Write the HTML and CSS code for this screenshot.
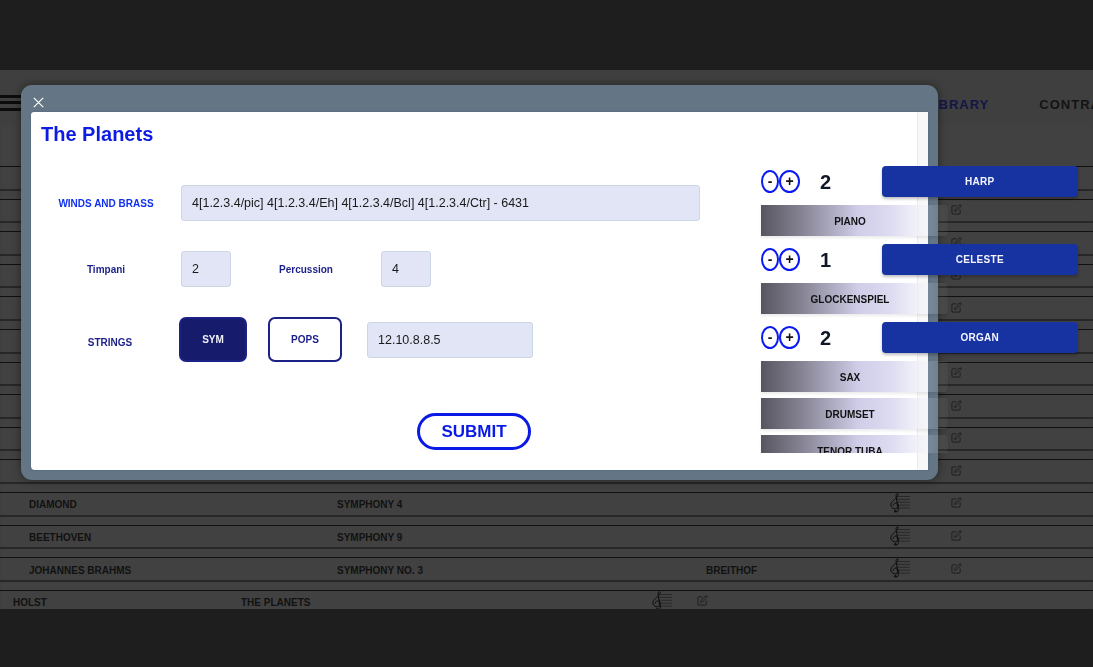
FILE: index.html
```html
<!DOCTYPE html>
<html lang="en">
<head>
  <meta charset="UTF-8" />
  <title>Library</title>
  <link rel="stylesheet" href="styles.css">
</head>
<body>
  <svg class="defs" width="0" height="0">
    <symbol id="clef" viewBox="0 0 20 20">
      <path class="staff" d="M6 3.500h14M6 6.400h14M6 9.300h14M6 12.200h14M6 15.100h14" />
      <path class="clef-stroke" d="M5.500 18.500c1.800.8 3.200-.3 2.900-2.200L6 3.400C5.800 1.400 7.500-.2 8 1.300c.8 2.600-5 5.700-6.600 8.500-1.500 3 .5 6 3.800 6 3 0 4.400-3.400 2-5.200-2-1.300-4.200 0-3.900 2.100" />
      <circle cx="5.400" cy="18.200" r="1.200" />
    </symbol>
    <symbol id="edit" viewBox="0 0 24 24">
      <path d="M11 4H4a2 2 0 0 0-2 2v14a2 2 0 0 0 2 2h14a2 2 0 0 0 2-2v-7" />
      <path d="M18.500 2.500a2.121 2.121 0 0 1 3 3L12 15l-4 1 1-4 9.500-9.500z" />
    </symbol>
  </svg>

  <div class="letterbox"></div>

  <div class="app">
    <header class="topbar">
      <div class="burger"><i></i><i></i><i></i></div>
      <nav class="nav">
        <a class="current">LIBRARY</a>
        <a>CONTRACTS</a>
      </nav>
    </header>

    <section class="rows">
      <div class="row"><span></span><span></span><span></span><svg class="ico-clef"><use href="#clef" /></svg><svg class="ico-edit"><use href="#edit" /></svg></div>
      <div class="row"><span></span><span></span><span></span><svg class="ico-clef"><use href="#clef" /></svg><svg class="ico-edit"><use href="#edit" /></svg></div>
      <div class="row"><span></span><span></span><span></span><svg class="ico-clef"><use href="#clef" /></svg><svg class="ico-edit"><use href="#edit" /></svg></div>
      <div class="row"><span></span><span></span><span></span><svg class="ico-clef"><use href="#clef" /></svg><svg class="ico-edit"><use href="#edit" /></svg></div>
      <div class="row"><span></span><span></span><span></span><svg class="ico-clef"><use href="#clef" /></svg><svg class="ico-edit"><use href="#edit" /></svg></div>
      <div class="row"><span></span><span></span><span></span><svg class="ico-clef"><use href="#clef" /></svg><svg class="ico-edit"><use href="#edit" /></svg></div>
      <div class="row"><span></span><span></span><span></span><svg class="ico-clef"><use href="#clef" /></svg><svg class="ico-edit"><use href="#edit" /></svg></div>
      <div class="row"><span></span><span></span><span></span><svg class="ico-clef"><use href="#clef" /></svg><svg class="ico-edit"><use href="#edit" /></svg></div>
      <div class="row"><span></span><span></span><span></span><svg class="ico-clef"><use href="#clef" /></svg><svg class="ico-edit"><use href="#edit" /></svg></div>
      <div class="row"><span></span><span></span><span></span><svg class="ico-clef"><use href="#clef" /></svg><svg class="ico-edit"><use href="#edit" /></svg></div>
      <div class="row"><span>DIAMOND</span><span>SYMPHONY 4</span><span></span><svg class="ico-clef"><use href="#clef" /></svg><svg class="ico-edit"><use href="#edit" /></svg></div>
      <div class="row"><span>BEETHOVEN</span><span>SYMPHONY 9</span><span></span><svg class="ico-clef"><use href="#clef" /></svg><svg class="ico-edit"><use href="#edit" /></svg></div>
      <div class="row"><span>JOHANNES BRAHMS</span><span>SYMPHONY NO. 3</span><span>BREITHOF</span><svg class="ico-clef"><use href="#clef" /></svg><svg class="ico-edit"><use href="#edit" /></svg></div>
      <div class="row row-new"><span>HOLST</span><span>THE PLANETS</span><svg class="ico-clef"><use href="#clef" /></svg><svg class="ico-edit"><use href="#edit" /></svg></div>
    </section>
  </div>

  <div class="letterbox letterbox-end"></div>

  <div class="modal">
    <button class="modal-close" aria-label="Close">
      <svg width="11" height="11" viewBox="0 0 11 11"><path d="M.8.800l9.400 9.400M10.200.800L.8 10.200" /></svg>
    </button>
    <div class="modal-body">
      <div class="scroll-track"></div>

      <form class="score-form">
        <h2>The Planets</h2>

        <div class="form-row">
          <label class="label label-bright">WINDS AND BRASS</label>
          <input class="field field-winds" value="4[1.2.3.4/pic] 4[1.2.3.4/Eh] 4[1.2.3.4/Bcl] 4[1.2.3.4/Ctr] - 6431" />
        </div>

        <div class="form-row">
          <label class="label">Timpani</label>
          <input class="field field-small" value="2" />
          <label class="label">Percussion</label>
          <input class="field field-small" value="4" />
        </div>

        <div class="form-row">
          <label class="label label-strings">STRINGS</label>
          <button type="button" class="toggle toggle-on">SYM</button>
          <button type="button" class="toggle toggle-pops">POPS</button>
          <input class="field field-strings" value="12.10.8.8.5" />
        </div>

        <button type="button" class="submit">SUBMIT</button>
      </form>

      <div class="instruments">
        <div class="count-row">
          <button class="step step-minus">-</button><button class="step">+</button>
          <span class="count">2</span>
          <button class="inst-on">HARP</button>
        </div>
        <button class="inst">PIANO</button>
        <div class="count-row">
          <button class="step step-minus">-</button><button class="step">+</button>
          <span class="count">1</span>
          <button class="inst-on">CELESTE</button>
        </div>
        <button class="inst">GLOCKENSPIEL</button>
        <div class="count-row">
          <button class="step step-minus">-</button><button class="step">+</button>
          <span class="count">2</span>
          <button class="inst-on">ORGAN</button>
        </div>
        <button class="inst">SAX</button>
        <button class="inst inst-tight">DRUMSET</button>
        <button class="inst inst-tight">TENOR TUBA</button>
      </div>
    </div>
  </div>
</body>
</html>
```

FILE: styles.css
```css
* {
  box-sizing: border-box;
}
html, body {
  height: 100%;
}
body {
  margin: 0;
  overflow: hidden;
  background-color: #1e1e1e;
  font-family: "Liberation Sans", Arial, sans-serif;
}
.defs {
  display: block;
  height: 0;
}
.letterbox {
  height: 70px;
  background-color: #1e1e1e;
}
.letterbox-end {
  height: 58px;
}

/* page behind the modal */
.app {
  height: 539px;
  overflow: hidden;
  background-color: #414141;
  box-shadow: inset 0 5px 5px -3px rgba(0,0,0,0.25);
}
.topbar {
  display: flex;
  align-items: center;
  height: 55px;
  padding-top: 13px;
  background-color: #3f3f3f;
  white-space: nowrap;
}
.burger {
  flex: none;
  display: flex;
  flex-direction: column;
  gap: 3.500px;
  width: 22px;
  margin-top: -3px;
}
.burger i {
  display: block;
  height: 3px;
  background-color: #0c0c0c;
}
.nav {
  display: flex;
  gap: 50px;
  margin-left: 903px;
  font-size: 13px;
  font-weight: 700;
  letter-spacing: 1px;
  color: #131313;
}
.nav .current {
  color: #131645;
}
.rows {
  padding-top: 41px;
}
.row {
  display: grid;
  grid-template-columns: 308px 369px 184px 61px 20px;
  align-items: center;
  height: 24.600px;
  margin-bottom: 8px;
  padding-left: 29px;
  border-top: 1px solid #101010;
  border-bottom: 2px solid #272727;
  font-size: 10px;
  font-weight: 700;
  color: #111;
}
.row span {
  padding-top: 2px;
}
.row-new {
  grid-template-columns: 228px 411px 45px 20px;
  padding-left: 13px;
}
.ico-clef {
  width: 20px;
  height: 20px;
  margin-bottom: 2px;
  fill: #0e0e0e;
  stroke: none;
}
.staff {
  stroke: #1f1f1f;
  stroke-width: 0.700;
  fill: none;
}
.clef-stroke {
  fill: none;
  stroke: #0e0e0e;
  stroke-width: 1;
}
.ico-edit {
  width: 11px;
  height: 11px;
  margin-bottom: 2px;
  fill: none;
  stroke: #1d1d1d;
  stroke-width: 2;
  stroke-linecap: round;
  stroke-linejoin: round;
}

/* modal */
.modal {
  position: absolute;
  left: 21px;
  top: 85px;
  width: 917px;
  height: 395px;
  padding: 27px 10px 10px;
  background-color: #647585;
  border-radius: 11px;
  box-shadow: 0 0 8px rgba(0,0,0,0.45);
  will-change: transform;
}
.modal-close {
  position: absolute;
  left: 12px;
  top: 12px;
  display: flex;
  padding: 0;
  background: none;
  border: 0;
}
.modal-close path {
  stroke: #fff;
  stroke-width: 1.200;
  fill: none;
}
.modal-body {
  position: relative;
  display: flex;
  height: 358px;
  background-color: #fff;
  border-radius: 3px 0 0 4px;
  box-shadow: 0 0 2px #4a6580;
}
.scroll-track {
  position: absolute;
  right: 0;
  top: 0;
  bottom: 0;
  width: 11px;
  background-color: #f8f8f8;
  border-left: 1px solid #ececec;
}

/* left side: the form */
.score-form {
  flex: none;
  display: flex;
  flex-direction: column;
  width: 730px;
  padding-top: 11px;
}
.score-form h2 {
  margin: 0 0 39px 10px;
  font-size: 20px;
  line-height: 23px;
  color: #0d1ce0;
}
.form-row {
  display: flex;
  align-items: center;
  margin-bottom: 30px;
}
.label {
  flex: none;
  width: 150px;
  font-size: 10px;
  font-weight: 700;
  text-align: center;
  color: #1b1f8a;
}
.label-bright {
  color: #1030f0;
}
.label-strings {
  padding: 6px 0 0 8px;
  margin-right: -2px;
}
.field {
  height: 36px;
  padding: 0 10px;
  background-color: #e2e5f5;
  border: 1px solid #cdd6e4;
  border-radius: 3px;
  font-family: inherit;
  font-size: 12.500px;
  color: #1a1a1a;
}
.field-winds {
  width: 519px;
}
.field-small {
  width: 50px;
}
.field-strings {
  width: 166px;
  margin-left: 25px;
}
.toggle {
  width: 68px;
  height: 45px;
  padding: 0;
  background-color: #161b6b;
  border: 2px solid #1c2185;
  border-radius: 7px;
  font-family: inherit;
  font-size: 10px;
  font-weight: 700;
  color: #f0f0f8;
}
.toggle-pops {
  width: 74px;
  margin-left: 21px;
  background-color: #fff;
  color: #1b1f8a;
}
.submit {
  align-self: flex-start;
  width: 114px;
  height: 37px;
  margin: 21px 0 0 386px;
  padding: 0;
  background-color: #fff;
  border: 3px solid #0a1ae6;
  border-radius: 19px;
  font-family: inherit;
  font-size: 17px;
  font-weight: 700;
  color: #0a1ae6;
}

/* right side: instrument list, clipped only at the bottom */
.instruments {
  position: relative;
  flex: none;
  width: 318px;
  height: 287px;
  margin-top: 54px;
  overflow-x: visible;
  overflow-y: clip;
}
.count-row {
  display: flex;
  align-items: center;
  height: 31px;
  margin-bottom: 8px;
}
.step {
  width: 21px;
  height: 23px;
  padding: 0;
  background-color: #fff;
  border: 2px solid #0a1af0;
  border-radius: 50%;
  font-family: inherit;
  font-size: 14px;
  font-weight: 700;
  line-height: 17px;
  color: #111;
}
.step-minus {
  width: 18px;
}
.count {
  width: 51px;
  padding: 1px 0 0 20px;
  font-size: 20px;
  font-weight: 700;
  color: #111827;
}
.count + .inst-on {
  margin-left: 30.500px;
}
.inst-on {
  width: 196.500px;
  height: 31px;
  padding: 0;
  background-color: #1733a1;
  border: 0;
  border-radius: 4px;
  box-shadow: 0 2px 3px rgba(0,0,0,0.25);
  font-family: inherit;
  font-size: 10px;
  font-weight: 700;
  letter-spacing: 0.3px;
  color: #f4f5ff;
}
.inst {
  display: block;
  width: 187px;
  height: 31px;
  margin-bottom: 8px;
  padding: 2px 9px 0 0;
  background: linear-gradient(90deg, #56555f 0%, #8d8b9c 25%, #cfcde8 52%, #dedcf1 70%, rgba(235,235,248,0.7) 83%, rgba(240,240,250,0.15) 90%, rgba(255,255,255,0.03) 100%);
  border: 0;
  border-radius: 0 4px 4px 0;
  box-shadow: 0 2px 3px rgba(0,0,0,0.08);
  font-family: inherit;
  font-size: 10px;
  font-weight: 700;
  color: #111;
}
.inst-tight {
  margin-top: -2px;
}
```
